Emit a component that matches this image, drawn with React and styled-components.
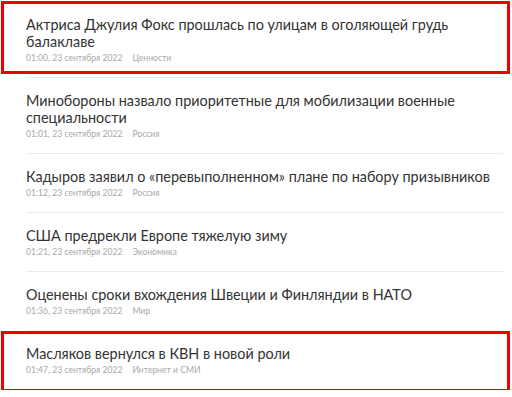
import React from "react";
import styled, { createGlobalStyle } from "styled-components";

const GlobalStyle = createGlobalStyle`
  html, body {
    margin: 0;
    padding: 0;
    background: #ffffff;
  }
  body {
    font-family: Lato, "Noto Sans", "Liberation Sans", sans-serif;
  }
`;

const news = [
  {
    title: "Актриса Джулия Фокс прошлась по улицам в оголяющей грудь балаклаве",
    time: "01:00, 23 сентября 2022",
    rubric: "Ценности",
    frame: { top: -1, bottom: 3 },
  },
  {
    title: "Минобороны назвало приоритетные для мобилизации военные специальности",
    time: "01:01, 23 сентября 2022",
    rubric: "Россия",
  },
  {
    title: "Кадыров заявил о «перевыполненном» плане по набору призывников",
    time: "01:12, 23 сентября 2022",
    rubric: "Россия",
  },
  {
    title: "США предрекли Европе тяжелую зиму",
    time: "01:21, 23 сентября 2022",
    rubric: "Экономика",
  },
  {
    title: "Оценены сроки вхождения Швеции и Финляндии в НАТО",
    time: "01:36, 23 сентября 2022",
    rubric: "Мир",
  },
  {
    title: "Масляков вернулся в КВН в новой роли",
    time: "01:47, 23 сентября 2022",
    rubric: "Интернет и СМИ",
    frame: { top: 0, bottom: -3 },
  },
];

const Feed = styled.div`
  display: flex;
  flex-direction: column;
  padding: 2px 9px 0 26px;
`;

const Item = styled.a`
  position: relative;
  display: flex;
  flex-direction: column;
  padding: 14px 0 13px;
  border-bottom: 1px solid #ebebeb;
  text-decoration: none;

  &::after {
    content: ${(p) => (p.$frame ? '""' : "none")};
    position: absolute;
    left: -25px;
    right: -7px;
    top: ${(p) => (p.$frame ? p.$frame.top : 0)}px;
    bottom: ${(p) => (p.$frame ? p.$frame.bottom : 0)}px;
    border: 3px solid #f00000;
    pointer-events: none;
  }
`;

const Title = styled.span`
  font-size: 14.4px;
  line-height: 17px;
  color: #333333;
`;

const Meta = styled.div`
  display: flex;
  gap: 10px;
  margin-top: 2px;
  font-size: 8.6px;
  line-height: 12px;
  color: #a8a8a8;
`;

export default function App() {
  return (
    <>
      <GlobalStyle />
      <Feed>
        {news.map((n) => (
          <Item key={n.time} $frame={n.frame}>
            <Title>{n.title}</Title>
            <Meta>
              <span>{n.time}</span>
              <span>{n.rubric}</span>
            </Meta>
          </Item>
        ))}
      </Feed>
    </>
  );
}
